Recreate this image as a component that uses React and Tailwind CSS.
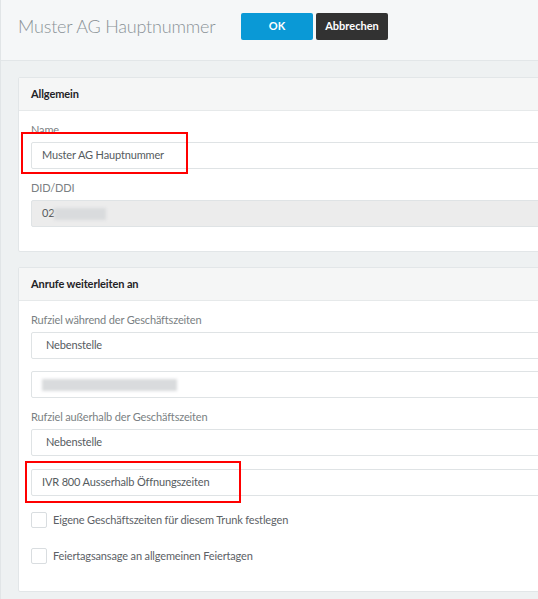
const Field = ({ label, children, className = '' }) => (
  <div className={className}>
    {label && <div className="text-[11px] tracking-[-0.15px] leading-[16px] text-[#7a7f83] mb-[4px]">{label}</div>}
    {children}
  </div>
);

const Input = ({ children, disabled, select }) => (
  <div
    className={`h-[27px] flex items-center border border-[#dfe3e5] rounded-[2px] text-[11px] tracking-[-0.15px] text-[#555b60] ${
      disabled ? 'bg-[#ececec]' : 'bg-white'
    } ${select ? 'pl-[14px]' : 'pl-[10px]'}`}
  >
    {children}
  </div>
);

const Blur = ({ w }) => (
  <div className="flex items-center">
    <div className={`h-[12px] ${w} bg-[#d9dbdd] blur-[1.5px]`} />
  </div>
);

const Card = ({ title, children, className = '' }) => (
  <div className={`bg-white border border-[#e2e6e8] rounded-[2px] ${className}`}>
    <div className="h-[33px] bg-[#f5f6f6] border-b border-[#e6e9ea] flex items-center px-[12px]">
      <span className="text-[11px] tracking-[-0.1px] font-bold text-[#1f2326]">{title}</span>
    </div>
    {children}
  </div>
);

const Checkbox = ({ label }) => (
  <div className="flex items-center gap-[6px] h-[16px]">
    <div className="w-[16px] h-[16px] border border-[#d9dde0] rounded-[2px] bg-white shrink-0" />
    <span className="text-[11px] tracking-[-0.15px] text-[#5c6166]">{label}</span>
  </div>
);

export default function App() {
  return (
    <div
      className="relative w-[538px] h-[599px] overflow-hidden bg-[#eef1f2] border-l border-[#e1e5e7]"
      style={{ fontFamily: 'Lato, "Open Sans", sans-serif' }}
    >
      {/* Header */}
      <div className="h-[61px] bg-[#f5f7f8] border-b border-[#e2e6e8] flex items-start pt-[13px] pl-[17px]">
        <h1 className="text-[18px] tracking-[-0.2px] font-light leading-[26px] text-[#8a9297] w-[223px]">Muster AG Hauptnummer</h1>
        <div className="flex gap-[3px]">
          <button className="w-[72px] h-[27px] bg-[#0a99d6] rounded-[2px] text-white text-[11px] font-bold">OK</button>
          <button className="w-[72px] h-[27px] bg-[#323232] rounded-[2px] text-white text-[11px] font-bold">Abbrechen</button>
        </div>
      </div>

      {/* Body */}
      <div className="w-[640px] pl-[17px] pt-[16px] flex flex-col gap-[15px]">
        <Card title="Allgemein">
          <div className="px-[12px] pt-[11px] pb-[24px] flex flex-col gap-[11px]">
            <Field label="Name">
              <Input>Muster AG Hauptnummer</Input>
            </Field>
            <Field label="DID/DDI">
              <Input disabled>
                <span>02</span>
                <Blur w="w-[52px]" />
              </Input>
            </Field>
          </div>
        </Card>

        <Card title="Anrufe weiterleiten an">
          <div className="px-[12px] pt-[11px] pb-[27px] flex flex-col">
            <Field label="Rufziel während der Geschäftszeiten">
              <Input select>Nebenstelle</Input>
            </Field>
            <div className="mt-[12px]">
              <Input>
                <Blur w="w-[135px]" />
              </Input>
            </div>
            <Field label="Rufziel außerhalb der Geschäftszeiten" className="mt-[11px]">
              <Input select>Nebenstelle</Input>
            </Field>
            <div className="mt-[13px]">
              <Input>IVR 800 Ausserhalb Öffnungszeiten</Input>
            </div>
            <div className="mt-[16px] flex flex-col gap-[20px]">
              <Checkbox label="Eigene Geschäftszeiten für diesem Trunk festlegen" />
              <Checkbox label="Feiertagsansage an allgemeinen Feiertagen" />
            </div>
          </div>
        </Card>
      </div>

      {/* Red annotation boxes */}
      <div className="absolute left-[20px] top-[132px] w-[167px] h-[42px] border-2 border-[#ff0000]" />
      <div className="absolute left-[24px] top-[461px] w-[216px] h-[42px] border-2 border-[#ff0000]" />
    </div>
  );
}
